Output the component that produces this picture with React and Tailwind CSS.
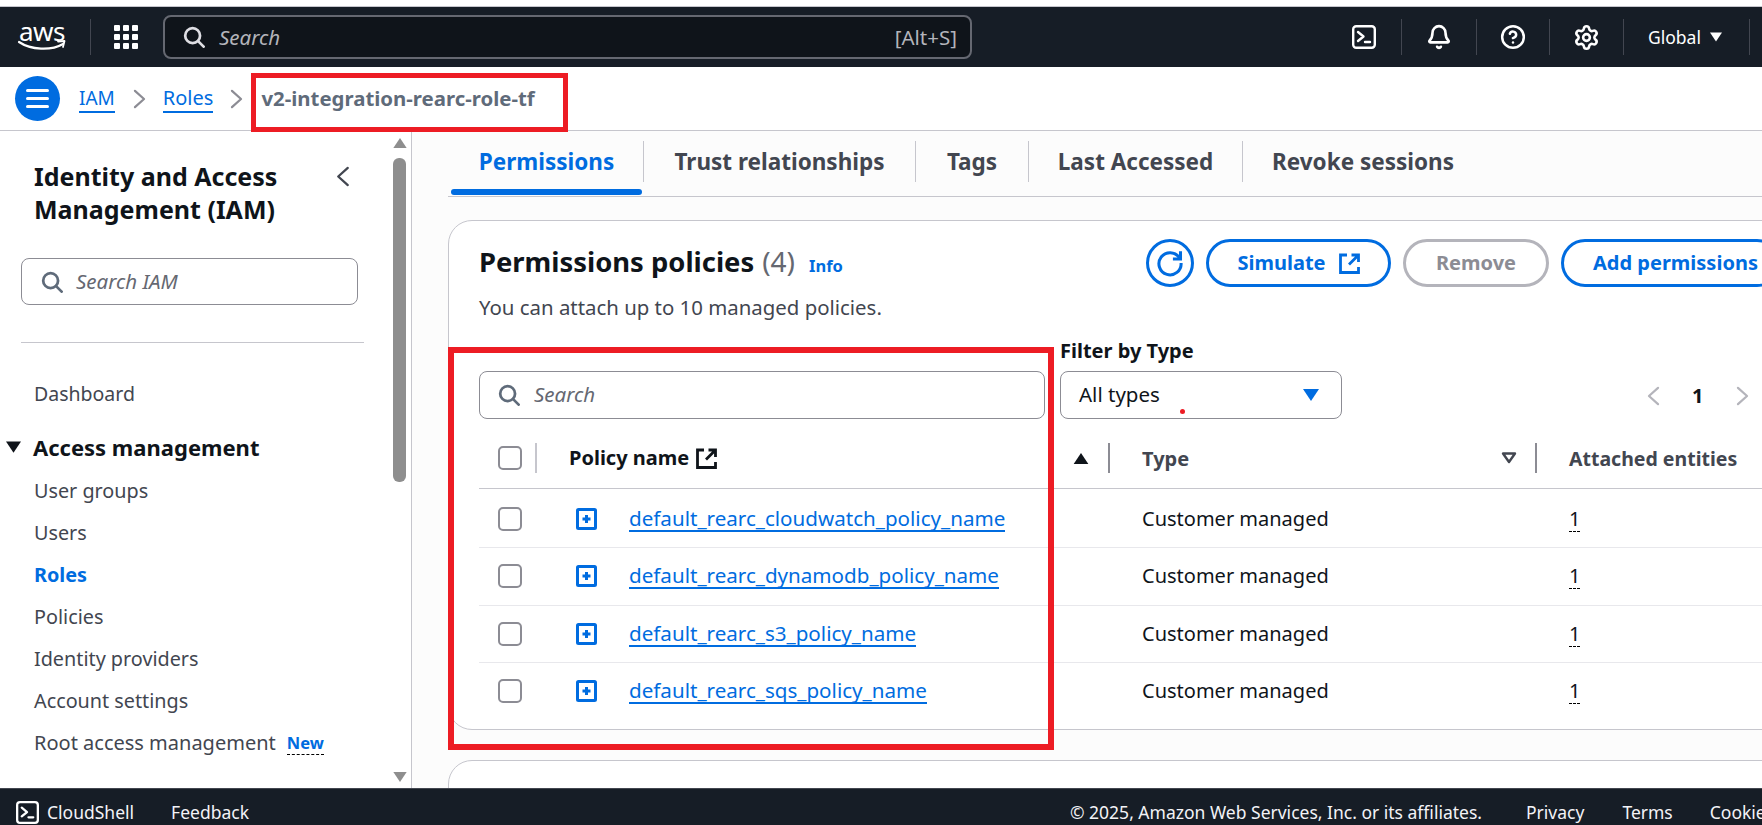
import { Bell, CircleHelp, Settings } from 'lucide-react'

const font = { fontFamily: '"Noto Sans", sans-serif' }

function SearchIcon({ className }) {
    return (
        <svg viewBox="0 0 16 16" fill="none" stroke="currentColor" strokeWidth="2" className={className}>
            <circle cx="7" cy="7" r="5.4" />
            <path d="M11 11l4 4" strokeLinecap="round" />
        </svg>
    )
}

function TerminalIcon({ className }) {
    return (
        <svg viewBox="0 0 24 24" fill="none" stroke="currentColor" strokeWidth="2.4" className={className}>
            <rect x="1.2" y="1.2" width="21.6" height="21.6" rx="3" />
            <path d="M6 7l5.5 4.5L6 16M13 17h5" strokeLinecap="round" strokeLinejoin="round" />
        </svg>
    )
}

function ExternalIcon({ className }) {
    return (
        <svg viewBox="0 0 21 21" fill="none" stroke="currentColor" strokeWidth="2.8" className={className}>
            <path d="M8 2H1.5v17.5h18V14" />
            <path d="M12.5 2h7v7M19 2.5L10 11.5" />
        </svg>
    )
}

function Chevron({ dir = 'right', className }) {
    return (
        <svg viewBox="0 0 14 22" fill="none" stroke="currentColor" strokeWidth="2.4" className={className}>
            <path d={dir === 'right' ? 'M2 2l10 9-10 9' : 'M12 2L2 11l10 9'} strokeLinejoin="round" strokeLinecap="round" />
        </svg>
    )
}

function Triangle({ className, up }) {
    return (
        <svg viewBox="0 0 16 12" fill="currentColor" className={className}>
            <path d={up ? 'M8 0l8 12H0z' : 'M0 0h16L8 12z'} />
        </svg>
    )
}

function NavDivider() {
    return <div className="w-px h-[36px] bg-[#424650]" />
}

function TopNav() {
    return (
        <div className="h-[60px] bg-[#161d26] flex items-center shrink-0 text-white">
            <div className="w-[90px] flex flex-col items-center pr-[6px]">
                <span className="text-[26px] leading-[18px] tracking-[-0.5px] font-normal">aws</span>
                <svg viewBox="0 0 50 12" fill="none" className="w-[50px] h-[12px]">
                    <path d="M2 2c12 8 32 9 44 2" stroke="white" strokeWidth="2.2" strokeLinecap="round" />
                    <path d="M41 1.5l6.5-.5-1.5 6" stroke="white" strokeWidth="1.8" strokeLinecap="round" strokeLinejoin="round" />
                </svg>
            </div>
            <NavDivider />
            <div className="ml-[23px] grid grid-cols-3 gap-[3px] w-[24px] shrink-0">
                {[0, 1, 2, 3, 4, 5, 6, 7, 8].map(i => <div key={i} className="w-[6px] h-[6px] rounded-[1px] bg-white" />)}
            </div>
            <div className="ml-[25px] w-[809px] h-[44px] rounded-[8px] border-2 border-[#656871] bg-[#0f141a] flex items-center pl-[18px] pr-[13px]">
                <SearchIcon className="w-[22px] h-[22px] text-[#dedee3]" />
                <span className="ml-[14px] italic text-[20.5px] text-[#b4b4bb]">Search</span>
                <span className="ml-auto text-[20.5px] text-[#b4b4bb]">[Alt+S]</span>
            </div>
            <div className="ml-[380px]"><TerminalIcon className="w-[24px] h-[24px]" /></div>
            <div className="ml-[25px]"><NavDivider /></div>
            <Bell className="ml-[24px] w-[26px] h-[26px]" strokeWidth={2.4} />
            <div className="ml-[24px]"><NavDivider /></div>
            <CircleHelp className="ml-[23px] w-[26px] h-[26px]" strokeWidth={2.3} />
            <div className="ml-[23px]"><NavDivider /></div>
            <Settings className="ml-[23px] w-[27px] h-[27px]" strokeWidth={2.3} />
            <div className="ml-[23px]"><NavDivider /></div>
            <span className="ml-[24px] text-[17.5px]">Global</span>
            <Triangle className="ml-[9px] w-[12px] h-[10px]" />
            <div className="ml-[27px]"><NavDivider /></div>
        </div>
    )
}

function Breadcrumb() {
    return (
        <div className="h-[64px] border-b border-[#c6c6cd] bg-white flex items-center pl-[15px] shrink-0 text-[20px]">
            <div className="w-[45px] h-[45px] rounded-full bg-[#006ce0] flex flex-col items-center justify-center gap-[5px]">
                <div className="w-[23px] h-[3px] bg-white rounded-sm" />
                <div className="w-[23px] h-[3px] bg-white rounded-sm" />
                <div className="w-[23px] h-[3px] bg-white rounded-sm" />
            </div>
            <span className="ml-[19px] text-[19px] text-[#006ce0] border-b-2 border-[#006ce0] leading-[26px]">IAM</span>
            <Chevron className="ml-[18px] w-[13px] h-[20px] text-[#8c8c94]" />
            <span className="ml-[17px] text-[#006ce0] border-b-2 border-[#006ce0] leading-[26px]">Roles</span>
            <Chevron className="ml-[17px] w-[13px] h-[20px] text-[#8c8c94]" />
            <span className="ml-[18px] text-[20.4px] font-bold text-[#5f6b7a]">v2-integration-rearc-role-tf</span>
        </div>
    )
}

const navItems = ['User groups', 'Users', 'Roles', 'Policies', 'Identity providers', 'Account settings']

function Sidebar() {
    return (
        <aside className="w-[412px] shrink-0 bg-white border-r border-[#c6c6cd] flex overflow-hidden">
            <div className="w-[381px] shrink-0 pt-[29px]">
                <div className="pl-[34px] pr-[18px] flex justify-between">
                    <h1 className="text-[25px] leading-[33px] font-bold text-[#0f141a]">Identity and Access<br />Management (IAM)</h1>
                    <Chevron dir="left" className="mt-[6px] w-[14px] h-[21px] text-[#424650] mr-[13px]" />
                </div>
                <div className="ml-[21px] mt-[32px] w-[337px] h-[47px] border border-[#8c8c94] rounded-[8px] flex items-center pl-[19px]">
                    <SearchIcon className="w-[22px] h-[22px] text-[#5f6b7a]" />
                    <span className="ml-[13px] italic text-[20.5px] text-[#656871]">Search IAM</span>
                </div>
                <div className="ml-[21px] mt-[37px] w-[343px] h-px bg-[#c6c6cd]" />
                <div className="pl-[34px] mt-[30px] h-[42px] flex items-center text-[19.5px] text-[#424650]">Dashboard</div>
                <div className="relative pl-[33px] mt-[11px] h-[42px] flex items-center text-[22px] font-bold text-[#0f141a]">
                    <Triangle className="absolute left-[6px] top-[15px] w-[15px] h-[12px]" />
                    Access management
                </div>
                <div className="mt-[2px]">
                    {navItems.map(item => (
                        <div key={item}
                            className={`pl-[34px] h-[42px] flex items-center text-[19.8px] ${item === 'Roles' ? 'font-bold text-[#006ce0]' : 'text-[#424650]'}`}>
                            {item}
                        </div>
                    ))}
                    <div className="pl-[34px] h-[42px] flex items-center text-[20px] text-[#424650]">
                        Root access management
                        <span className="ml-[11px] text-[16.5px] font-bold text-[#006ce0] border-b border-dashed border-black leading-[22px]">New</span>
                    </div>
                </div>
                <div className="relative pl-[33px] mt-[23px] text-[22px] font-bold text-[#0f141a]">Access reports</div>
            </div>
            <div className="ml-[12px] w-[13px] shrink-0 flex flex-col items-center pt-[7px] pb-[6px]">
                <Triangle up className="w-[14px] h-[10px] text-[#8e8e8e]" />
                <div className="mt-[10px] w-[13px] h-[324px] rounded-[6px] bg-[#8e8e8e]" />
                <Triangle className="mt-auto w-[14px] h-[10px] text-[#8e8e8e]" />
            </div>
        </aside>
    )
}

const tabs = [
    { label: 'Trust relationships', w: 'w-[272px]', border: true },
    { label: 'Tags', w: 'w-[113px]', border: true },
    { label: 'Last Accessed', w: 'w-[214px]', border: true },
    { label: 'Revoke sessions', w: 'w-[240px]', border: false },
]

function Tabs() {
    return (
        <div className="ml-[36px] h-[66px] border-b border-[#c6c6cd] flex pl-[3px] pt-[10px] text-[22.5px] font-bold text-[#424650]">
            <div className="relative w-[193px] h-[41px] border-r border-[#c6c6cd] flex items-center justify-center text-[#006ce0] pr-[1px]">
                Permissions
                <div className="absolute left-0 top-[48px] w-[191px] h-[6px] rounded-[3px] bg-[#006ce0]" />
            </div>
            {tabs.map(t => (
                <div key={t.label} className={`h-[41px] flex items-center justify-center ${t.w} ${t.border ? 'border-r border-[#c6c6cd]' : ''}`}>{t.label}</div>
            ))}
        </div>
    )
}

function PillButton({ className, children }) {
    return (
        <div className={`h-[48px] rounded-[24px] border-[3px] flex items-center justify-center text-[20px] font-bold shrink-0 ${className}`}>
            {children}
        </div>
    )
}

function Checkbox() {
    return <div className="w-[24px] h-[24px] rounded-[5px] border-2 border-[#8c8c94] bg-white" />
}

function ExpandIcon() {
    return (
        <svg viewBox="0 0 21 22" className="w-[21px] h-[22px] shrink-0">
            <rect x="1.5" y="1.5" width="18" height="19" rx="1" fill="none" stroke="#006ce0" strokeWidth="3" />
            <path d="M10.5 7v8M6.5 11h8" stroke="#006ce0" strokeWidth="3" />
        </svg>
    )
}

function HeaderDivider() {
    return <div className="ml-auto w-[2px] h-[30px] bg-[#8c8c94] shrink-0" />
}

const policies = [
    { name: 'default_rearc_cloudwatch_policy_name', h: 'h-[59px] pt-[2px] border-b border-[#e8e8ec]' },
    { name: 'default_rearc_dynamodb_policy_name', h: 'h-[58px] pb-[1px] border-b border-[#e8e8ec]' },
    { name: 'default_rearc_s3_policy_name', h: 'h-[57px] border-b border-[#e8e8ec]' },
    { name: 'default_rearc_sqs_policy_name', h: 'h-[56px]' },
]

function PolicyTable() {
    return (
        <div>
            <div className="grid grid-cols-[58px_573px_427px_500px] h-[70px] pt-[9px] border-b border-[#c6c6cd] font-bold">
                <div className="flex items-center pl-[19px]">
                    <Checkbox />
                    <div className="ml-auto w-[2px] h-[30px] bg-[#c6c6cd]" />
                </div>
                <div className="flex items-center pl-[32px] text-[20px] text-[#0f141a]">
                    Policy name
                    <ExternalIcon className="ml-[7px] w-[21px] h-[21px]" />
                    <Triangle up className="ml-[356px] w-[16px] h-[11px]" />
                    <HeaderDivider />
                </div>
                <div className="flex items-center pl-[32px] text-[20px] text-[#424650]">
                    <span className="pt-[2px]">Type</span>
                    <svg viewBox="0 0 16 12" className="ml-auto mr-[18px] w-[16px] h-[12px]" fill="none" stroke="#424650" strokeWidth="2.4">
                        <path d="M2 1.5h12L8 10z" strokeLinejoin="round" />
                    </svg>
                    <div className="w-[2px] h-[30px] bg-[#8c8c94] shrink-0" />
                </div>
                <div className="flex items-center pl-[32px] text-[19.5px] text-[#424650]"><span className="pt-[2px]">Attached entities</span></div>
            </div>
            {policies.map(p => (
                <div key={p.name} className={`grid grid-cols-[58px_573px_427px_500px] items-center text-[#0f141a] ${p.h}`}>
                    <div className="pl-[19px] flex"><Checkbox /></div>
                    <div className="pl-[39px] flex items-center">
                        <ExpandIcon />
                        <span className="ml-[32px] text-[20.6px] text-[#006ce0] border-b-2 border-[#006ce0] leading-[24px]">{p.name}</span>
                    </div>
                    <div className="pl-[32px] text-[20px]">Customer managed</div>
                    <div className="pl-[32px] text-[20px]">
                        <span className="border-b border-dashed border-black leading-[24px] inline-block">1</span>
                    </div>
                </div>
            ))}
        </div>
    )
}

function PermissionsCard() {
    return (
        <div className="ml-[36px] mt-[23px] w-[1400px] h-[510px] bg-white border border-[#c6c6cd] rounded-[24px] pl-[30px] pt-[18px]">
            <div className="flex items-start">
                <div className="w-[667px] shrink-0 pt-[5px]">
                    <div className="flex items-baseline h-[34px] leading-[34px]">
                        <h2 className="text-[27.4px] font-bold text-[#0f141a]">Permissions policies</h2>
                        <span className="ml-[8px] text-[28px] text-[#656871]">(4)</span>
                        <span className="ml-[14px] text-[16.5px] font-bold text-[#006ce0]">Info</span>
                    </div>
                    <p className="mt-[15px] text-[20.4px] leading-[28px] text-[#424650]">You can attach up to 10 managed policies.</p>
                </div>
                <div className="flex gap-[12px]">
                    <div className="w-[48px] h-[48px] rounded-full border-[3px] border-[#006ce0] flex items-center justify-center shrink-0">
                        <svg viewBox="0 0 24 24" fill="none" stroke="#006ce0" strokeWidth="2.6" className="w-[28px] h-[28px]">
                            <path d="M20 7.5A9.5 9.5 0 1 0 21.5 12" />
                            <path d="M21 2v6.5h-6.5" />
                        </svg>
                    </div>
                    <PillButton className="w-[185px] border-[#006ce0] text-[#006ce0]">
                        Simulate
                        <ExternalIcon className="ml-[13px] w-[21px] h-[21px]" />
                    </PillButton>
                    <PillButton className="w-[146px] border-[#b4b4bb] text-[#8c8c94]">Remove</PillButton>
                    <PillButton className="w-[220px] pl-[29px] !justify-start border-[#006ce0] text-[#006ce0]">Add permissions</PillButton>
                </div>
            </div>
            <div className="flex items-end mt-[19px]">
                <div className="w-[566px] h-[48px] shrink-0 border border-[#8c8c94] rounded-[8px] flex items-center pl-[18px]">
                    <SearchIcon className="w-[22px] h-[22px] text-[#5f6b7a]" />
                    <span className="ml-[14px] pb-[2px] italic text-[20.5px] text-[#656871]">Search</span>
                </div>
                <div className="ml-[15px] w-[282px] shrink-0">
                    <div className="text-[20px] leading-[21px] font-bold text-[#0f141a] mb-[10px]">Filter by Type</div>
                    <div className="relative h-[48px] border border-[#8c8c94] rounded-[8px] flex items-center pl-[18px] pr-[22px] text-[20.5px] text-[#0f141a]">
                        <span className="pb-[2px]">All types</span>
                        <Triangle className="ml-auto w-[16px] h-[12px] text-[#006ce0]" />
                        <div className="absolute left-[119px] top-[37px] w-[5px] h-[5px] rounded-full bg-[#ed1c24]" />
                    </div>
                </div>
                <div className="ml-[305px] h-[46px] flex items-center text-[20px] font-bold text-[#0f141a]">
                    <Chevron dir="left" className="w-[13px] h-[20px] text-[#b4b4bb]" />
                    <span className="ml-[32px]">1</span>
                    <Chevron className="ml-[33px] w-[13px] h-[20px] text-[#b4b4bb]" />
                </div>
            </div>
            <PolicyTable />
        </div>
    )
}

function Footer() {
    return (
        <div className="h-[37px] shrink-0 bg-[#161d26] border-t border-[#424650] flex items-start text-[17.5px] leading-[24px] text-[#f3f3f7] pt-[11px] whitespace-nowrap overflow-hidden">
            <TerminalIcon className="ml-[16px] mt-[1px] w-[23px] h-[23px] text-white shrink-0" />
            <span className="ml-[8px]">CloudShell</span>
            <span className="ml-[37px]">Feedback</span>
            <span className="ml-[821px]">© 2025, Amazon Web Services, Inc. or its affiliates.</span>
            <span className="ml-[44px]">Privacy</span>
            <span className="ml-[38px]">Terms</span>
            <span className="ml-[37px]">Cookies</span>
        </div>
    )
}

export default function App() {
    return (
        <div style={font} className="relative w-[1762px] h-[825px] overflow-hidden flex flex-col bg-white">
            <div className="h-[7px] shrink-0 bg-white border-b border-[#c6c6cd]" />
            <TopNav />
            <Breadcrumb />
            <div className="flex-1 flex min-h-0">
                <Sidebar />
                <main className="flex-1 bg-[#fcfcfc] overflow-hidden">
                    <Tabs />
                    <PermissionsCard />
                    <div className="ml-[36px] mt-[30px] w-[1400px] h-[100px] bg-white border border-[#c6c6cd] rounded-[24px]" />
                </main>
            </div>
            <Footer />

            {/* red annotation boxes drawn over the page */}
            <div className="absolute left-[251px] top-[73px] w-[317px] h-[59px] border-[5px] border-[#ed1c24]" />
            <div className="absolute left-[448px] top-[347px] w-[606px] h-[403px] border-[6px] border-[#ed1c24]" />
        </div>
    )
}
